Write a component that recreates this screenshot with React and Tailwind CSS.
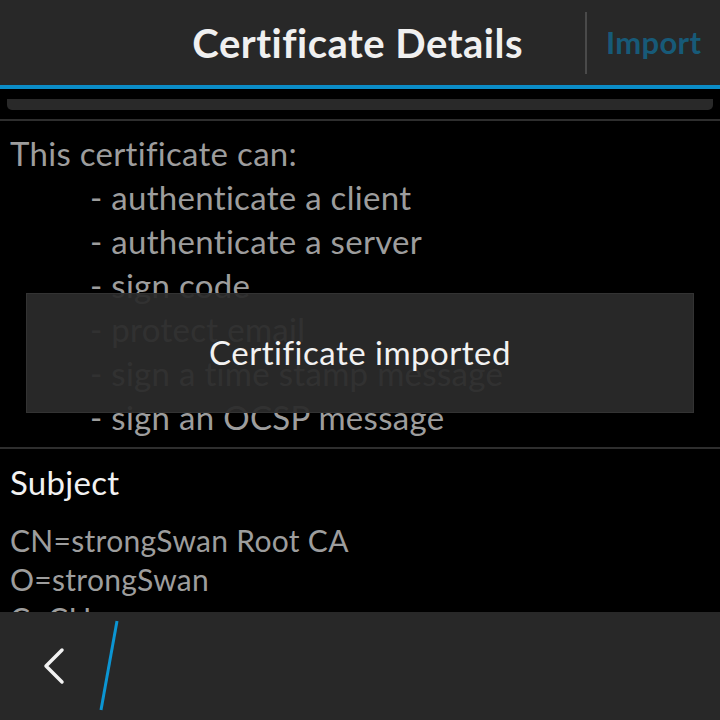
import React from 'react';

const font = { fontFamily: 'Lato, "Open Sans", sans-serif' };

const uses = [
    '- authenticate a client',
    '- authenticate a server',
    '- sign code',
    '- protect email',
    '- sign a time stamp message',
    '- sign an OCSP message',
];

const App = () => {
    return (
        <div className="relative w-[720px] h-[720px] bg-black overflow-hidden flex flex-col" style={font}>
            {/* Title bar */}
            <div className="h-[85px] bg-[#282828] flex items-center shrink-0">
                <div className="flex-1 flex justify-end pr-[62px]">
                    <h1 className="text-[40px] font-bold text-[#f0f0f0] tracking-[0.5px]">Certificate Details</h1>
                </div>
                <div className="w-[2px] h-[62px] bg-[#4a4a4a]" />
                <button className="w-[133px] text-[31px] font-bold text-[#175a78] text-left pl-[19px] tracking-[0.3px]">Import</button>
            </div>
            <div className="h-[4px] bg-[#0b8dc8] shrink-0" />

            {/* Content */}
            <div className="flex-1 flex flex-col overflow-hidden">
                <div className="h-[11px] mx-[7px] mt-[10px] bg-[#292929] rounded-b-[5px] shrink-0" />
                <div className="h-[2px] bg-[#2e2e2e] mt-[9px] shrink-0" />

                <div className="pl-[10px] pt-[10px] pb-[8px] text-[33px] leading-[44px] tracking-[0.3px] text-[#9d9d9d]">
                    <p>This certificate can:</p>
                    {uses.map(u => (
                        <p key={u} className="pl-[80px]">{u}</p>
                    ))}
                </div>
                <div className="h-[2px] bg-[#2e2e2e] shrink-0" />

                <div className="pl-[10px] pt-[11px]">
                    <p className="text-[33px] leading-[44px] tracking-[0.3px] text-[#f2f2f2]">Subject</p>
                    <div className="mt-[17px] text-[30px] leading-[39px] tracking-[0.3px] text-[#9d9d9d]">
                        <p>CN=strongSwan Root CA</p>
                        <p>O=strongSwan</p>
                        <p>C=CH</p>
                    </div>
                </div>
            </div>

            {/* Bottom action bar */}
            <div className="h-[108px] bg-[#282828] shrink-0 relative flex items-center">
                <svg width="720" height="108" viewBox="0 0 720 108" className="absolute inset-0">
                    <polyline points="62,38 46,54 62,70" fill="none" stroke="#f2f2f2" strokeWidth="3.5" strokeLinecap="round" strokeLinejoin="round" />
                    <line x1="117" y1="9" x2="101" y2="98" stroke="#0b95d3" strokeWidth="3" />
                </svg>
            </div>

            {/* Toast */}
            <div className="absolute left-[26px] top-[293px] w-[668px] h-[120px] bg-[#2a2a2a]/[0.94] border border-[#333] flex items-center justify-center">
                <span className="text-[33px] tracking-[0.5px] text-[#f2f2f2]">Certificate imported</span>
            </div>
        </div>
    );
};

export default App;
